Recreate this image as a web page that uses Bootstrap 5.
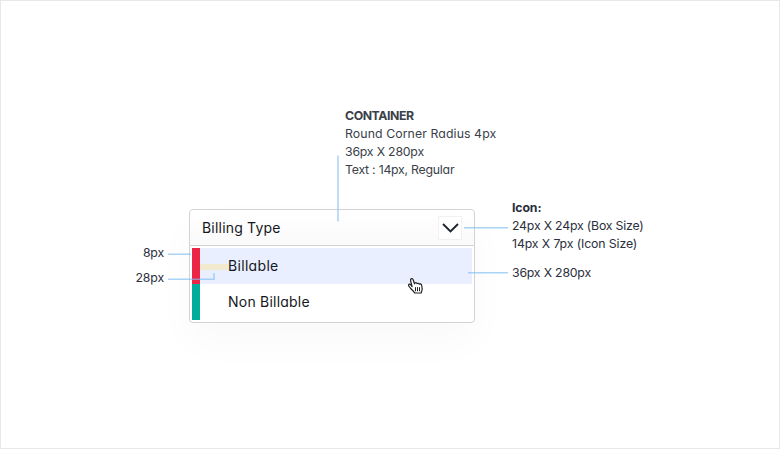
<!DOCTYPE html>
<html lang="en">
<head>
<meta charset="utf-8">
<title>Billing Type dropdown spec</title>
<meta name="viewport" content="width=device-width, initial-scale=1">
<link href="https://cdn.jsdelivr.net/npm/bootstrap@5.3.0/dist/css/bootstrap.min.css" rel="stylesheet">
<style>
body{width:780px;height:449px;overflow:hidden;background:#fff;font-family:Inter,"Open Sans",sans-serif;font-feature-settings:"cv11";color:#2a303c}
.sheet{width:780px;height:449px;border:1px solid #e8e8e8;padding-top:106px}
.note{font-size:12.3px;line-height:18px;white-space:nowrap}
.note-top{margin-left:344px;height:102px;color:#3a3f4a}
.col-left{width:163px;padding-top:35px;letter-spacing:-.15px}
.col-left div{height:25px}
.col-mid{width:286px;margin-left:25px}
.col-right{margin-left:37px;margin-top:-10px}
.row-size{margin-top:11px}
.select-box{height:114px;border:1px solid #d3d3d3;border-radius:4px;background:#fff;box-shadow:0 18px 40px rgba(0,0,0,.028);font-size:14px;color:#15171c}
.select-head{height:36px;border-bottom:1px solid #d3d3d3;padding:0 12px;border-radius:4px 4px 0 0;background:linear-gradient(#fff,#fafafa)}
.chev{width:24px;height:24px;border:1px solid #f1f1f1;background:#fff}
.options{padding:2px}
.opt{height:36px;padding:0 0 2px 28px;border-left:8px solid #00ad9c}
.opt-hot{background:#e9effe;border-left-color:#ec2546}
.overlay{left:0;top:0;pointer-events:none}
.t-title{letter-spacing:-.45px}
.t-radius{letter-spacing:.09px}
.t-size{letter-spacing:-.2px}
.t-text{letter-spacing:-.24px}
.t-head{letter-spacing:.2px}
.t-bill{letter-spacing:.32px}
.t-non{letter-spacing:.22px}
.t-icon{letter-spacing:-.12px}
</style>
<script src="https://cdn.jsdelivr.net/npm/bootstrap@5.3.0/dist/js/bootstrap.bundle.min.js"></script>
</head>
<body>
<main class="sheet position-relative">
  <div class="note note-top">
    <div class="fw-bold t-title">CONTAINER</div>
    <div class="t-radius">Round Corner Radius 4px</div>
    <div class="t-size">36px X 280px</div>
    <div class="t-text">Text : 14px, Regular</div>
  </div>
  <div class="d-flex align-items-start">
    <div class="col-left note text-end">
      <div>8px</div>
      <div>28px</div>
    </div>
    <div class="col-mid">
      <div class="select-box">
        <div class="select-head d-flex align-items-center justify-content-between">
          <span class="t-head">Billing Type</span>
          <span class="chev d-flex align-items-center justify-content-center">
            <svg width="18" height="10" viewBox="0 0 18 10" fill="none" stroke="#1f2530" stroke-width="1.900"><path d="M2 1l7.500 7.500L17 1"/></svg>
          </span>
        </div>
        <div class="options">
          <div class="opt opt-hot d-flex align-items-center"><span class="t-bill">Billable</span></div>
          <div class="opt d-flex align-items-center"><span class="t-non">Non Billable</span></div>
        </div>
      </div>
    </div>
    <div class="col-right note">
      <div class="fw-bold t-icon">Icon:</div>
      <div class="t-size">24px X 24px (Box Size)</div>
      <div class="t-icon">14px X 7px (Icon Size)</div>
      <div class="row-size t-size">36px X 280px</div>
    </div>
  </div>
  <svg class="overlay position-absolute" width="778" height="447" viewBox="1 1 778 447" fill="none">
    <path d="M200 267h28" stroke="#f1eace" stroke-width="6"/>
    <g stroke="#7dbcf5" stroke-opacity=".65" stroke-width="1.500">
      <path d="M338 155.500v66M464 227.750h44M468 272.750h40M168 254.250h23M168 279.250h46v-6"/>
    </g>
    <g transform="translate(-.5 -.8)">
      <path d="M412.600 287.500l-1.500-5.900c-.5-2.300 1.800-3 2.500-1l1.400 4 .4-.8c1-.6 1.900-.2 2.200.7.800-.8 1.900-.4 2.300.5 1-.6 2.200 0 2.300 1.300l.5 3.500c0 1.500-.8 2.400-1 4h-6.500c-.6-1.700-2.600-2.800-4-4.500l-2-2.600c-.8-1.400.8-2.300 2-1.200z" fill="#fff" stroke="#222" stroke-width="1.200" stroke-linejoin="round"/>
      <path d="M416 288v4M418 288v4M420 288v4" stroke="#222"/>
    </g>
  </svg>
</main>
</body>
</html>
